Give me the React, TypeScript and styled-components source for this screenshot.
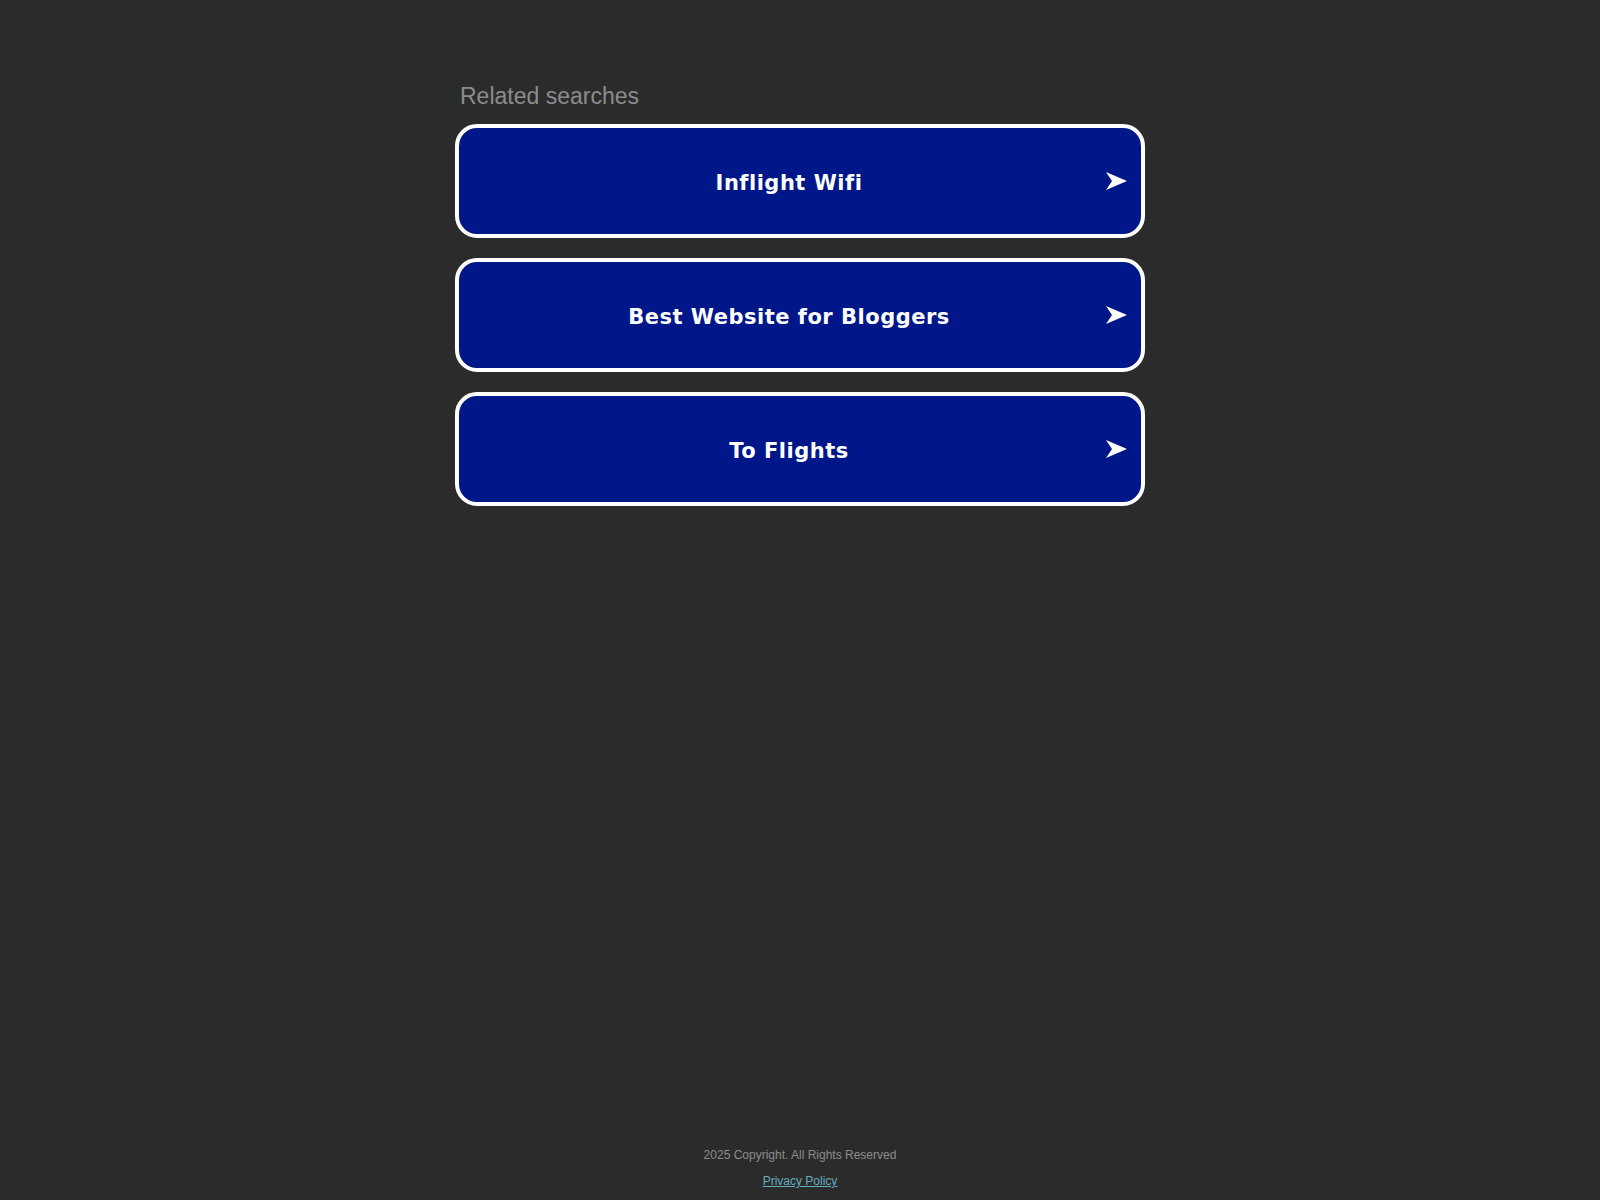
import { createGlobalStyle, styled } from "styled-components";

const searches = ["Inflight Wifi", "Best Website for Bloggers", "To Flights"];

const GlobalStyle = createGlobalStyle`
  html, body {
    margin: 0;
    padding: 0;
    background: #2b2b2b;
  }
  body {
    font-family: "Liberation Sans", Arial, sans-serif;
  }
`;

function Arrow() {
  return (
    <ArrowIcon width="21" height="18" viewBox="0 0 21 18" aria-hidden>
      <polygon points="0,0 21,9 0,18 6,9" fill="#ffffff" />
    </ArrowIcon>
  );
}

function SearchLink({ label }: { label: string }) {
  return (
    <Card href="#">
      <CardLabel>{label}</CardLabel>
      <Arrow />
    </Card>
  );
}

export default function App() {
  return (
    <>
      <GlobalStyle />
      <Page>
        <Main>
          <Heading>Related searches</Heading>
          <List>
            {searches.map((s) => (
              <SearchLink key={s} label={s} />
            ))}
          </List>
        </Main>
        <Footer>
          <Copyright>2025 Copyright. All Rights Reserved</Copyright>
          <PrivacyLink href="#">Privacy Policy</PrivacyLink>
        </Footer>
      </Page>
    </>
  );
}

const Page = styled.div`
  min-height: 100vh;
  display: flex;
  flex-direction: column;
  align-items: center;
`;

const Main = styled.main`
  width: 690px;
  padding-top: 83px;
  flex: 1;
`;

const Heading = styled.h2`
  margin: 0 0 15px 5px;
  font-size: 23px;
  line-height: 26px;
  font-weight: 400;
  color: #8c8c8c;
`;

const List = styled.div`
  display: flex;
  flex-direction: column;
  gap: 20px;
`;

const Card = styled.a`
  position: relative;
  height: 114px;
  box-sizing: border-box;
  border: 4px solid #ffffff;
  border-radius: 22px;
  background: #001789;
  display: flex;
  align-items: center;
  justify-content: center;
  padding: 3px 22px 0 0;
  text-decoration: none;
`;

const CardLabel = styled.span`
  font-family: "DejaVu Sans", Verdana, sans-serif;
  font-weight: 700;
  font-size: 21px;
  letter-spacing: 0.5px;
  color: #ffffff;
`;

const ArrowIcon = styled.svg`
  position: absolute;
  right: 14px;
  top: 44px;
`;

const Footer = styled.footer`
  display: flex;
  flex-direction: column;
  align-items: center;
  gap: 12px;
  padding-bottom: 12px;
  font-size: 12px;
  line-height: 14px;
`;

const Copyright = styled.div`
  color: #8c8c8c;
`;

const PrivacyLink = styled.a`
  color: #66adbd;
  text-decoration: underline;
`;
